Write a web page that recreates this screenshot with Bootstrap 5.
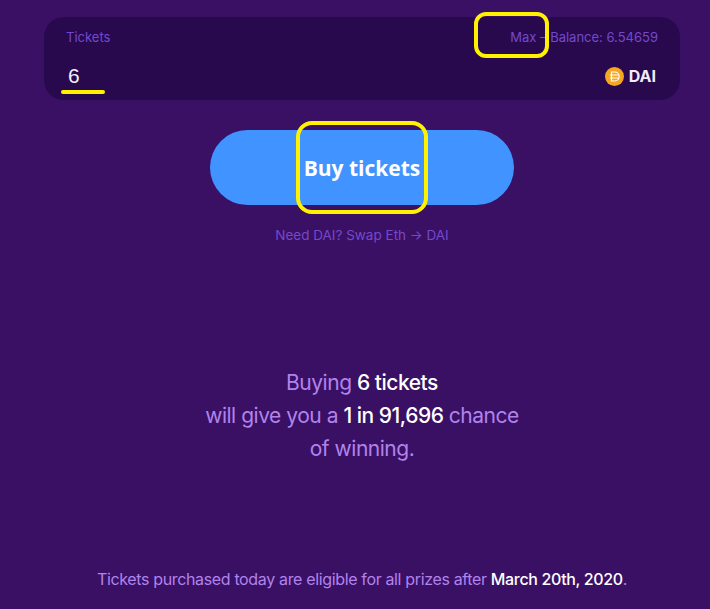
<!DOCTYPE html>
<html lang="en">
<head>
<meta charset="utf-8">
<title>Buy tickets</title>
<link href="https://cdn.jsdelivr.net/npm/bootstrap@5.3.0/dist/css/bootstrap.min.css" rel="stylesheet">
<style>
html, body { height: 100%; }
body { background: #3a1064; font-family: Inter, "Noto Sans", sans-serif; overflow: hidden; }
.shot { position: relative; width: 710px; height: 609px; padding: 17px 30px 0 44px; }
.ticket-panel { height: 83px; background: #28094e; border-radius: 20px; padding: 12px 22px 0; color: #7349cc; font-size: 13px; line-height: 16px; letter-spacing: 0; }
.ticket-row { height: 16px; }
.ticket-value { margin-top: 18px; height: 26px; padding-left: 2px; padding-right: 2px; }
.ticket-num { font-family: "Liberation Sans", sans-serif; font-size: 21px; line-height: 26px; color: #f4effb; }
.dai-label { color: #f1ebfa; font-weight: 700; font-size: 16px; margin-left: 5px; }
.buy-wrap { margin-top: 30px; }
.buy-btn { width: 304px; height: 75px; padding-top: 8px; border-radius: 38px; border: 0; background: #4194ff; color: #fff; font-family: "Open Sans", sans-serif; font-weight: 700; font-size: 21px; }
.buy-btn:hover { background: #4194ff; color: #fff; }
.swap-line { margin-top: 22px; color: #7349cc; font-size: 13.5px; line-height: 16px; }
.odds { margin-top: 123px; color: #b083ec; font-size: 21px; line-height: 33px; letter-spacing: -.48px; }
.odds b, .foot-note b { color: #fff; font-weight: 500; }
.foot-note { margin-top: 104px; color: #b083ec; font-size: 16px; line-height: 20px; letter-spacing: -.35px; white-space: nowrap; }
.mark-box { position: absolute; border: 4px solid #fff200; }
.mark-max { left: 474px; top: 12px; width: 75px; height: 46px; border-radius: 12px; }
.mark-buy { left: 296px; top: 121px; width: 132px; height: 93px; border-radius: 16px; }
.mark-line { position: absolute; left: 61px; top: 90px; width: 44px; height: 4px; border-radius: 2px; background: #fff200; }
</style>
</head>
<body>
<div class="shot">
  <div class="ticket-panel">
    <div class="ticket-row d-flex justify-content-between"><span>Tickets</span><span>Max – Balance: 6.54659</span></div>
    <div class="ticket-value d-flex justify-content-between align-items-center">
      <span class="ticket-num">6</span>
      <span class="d-flex align-items-center">
        <svg width="19" height="19" viewBox="0 0 19 19" aria-hidden="true"><circle cx="9.5" cy="9.5" r="9.5" fill="#f5a623"/><path d="M6.5 5h3.2a4.5 4.5 0 0 1 0 9H6.5zM5 8h9M5 11h9" fill="none" stroke="#fff" stroke-width="1.2"/></svg>
        <span class="dai-label">DAI</span>
      </span>
    </div>
  </div>
  <div class="buy-wrap text-center"><button type="button" class="btn buy-btn">Buy tickets</button></div>
  <div class="swap-line text-center">Need DAI? Swap Eth → DAI</div>
  <div class="odds text-center">Buying <b>6 tickets</b><br>will give you a <b>1 in 91,696</b> chance<br>of winning.</div>
  <div class="foot-note text-center">Tickets purchased today are eligible for all prizes after <b>March 20th, 2020</b>.</div>
  <div class="mark-box mark-max"></div>
  <div class="mark-box mark-buy"></div>
  <div class="mark-line"></div>
</div>
<script src="https://cdn.jsdelivr.net/npm/bootstrap@5.3.0/dist/js/bootstrap.bundle.min.js"></script>
</body>
</html>
